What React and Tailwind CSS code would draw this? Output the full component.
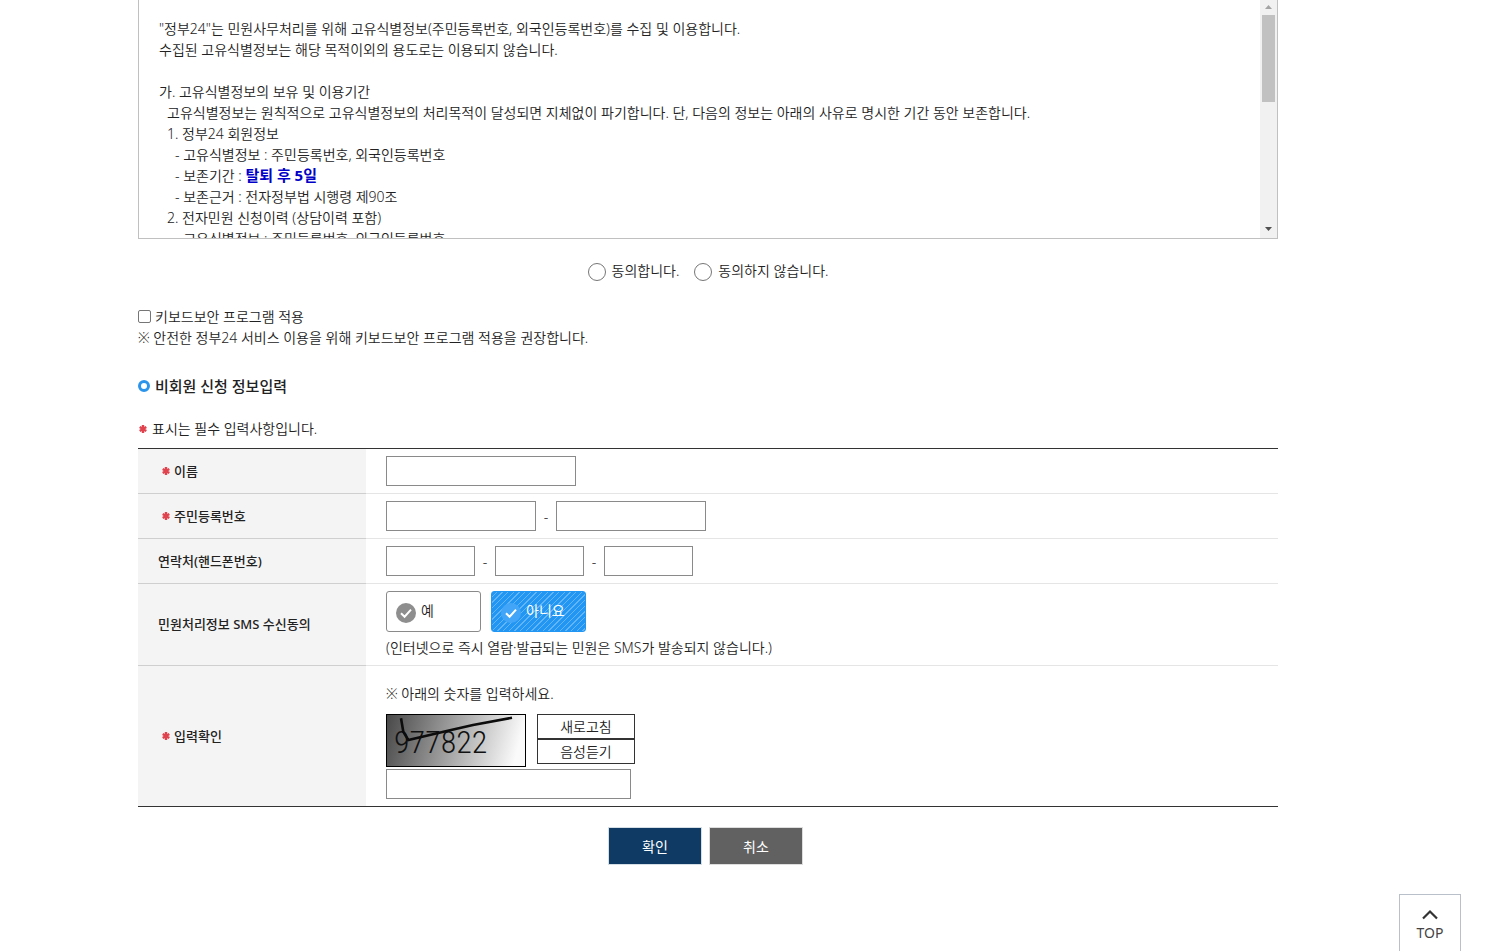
import React from "react";

function RequiredMark() {
  return (
    <svg className="h-2 w-2 shrink-0" viewBox="0 0 8 8" role="img" aria-label="필수">
      <path d="M4 0v8M0.7 2l6.6 4M7.3 2L0.7 6" stroke="#e0434e" strokeWidth="2.400" fill="none" />
    </svg>
  );
}

function CheckCircle({ circle, mark }) {
  return (
    <svg className="mt-[2px] h-5 w-5 shrink-0" viewBox="0 0 20 20" aria-hidden="true">
      <circle cx="10" cy="10" r="10" fill={circle} />
      <path d="M5 10.2l3.600 3.500 6.400-7" stroke={mark} strokeWidth="2" fill="none" />
    </svg>
  );
}

function Row({ label, htmlFor, required, children }) {
  const inner = (
    <>
      {required && <RequiredMark />}
      <span>{label}</span>
    </>
  );
  const inset = required ? "flex items-center gap-1 pl-6" : "flex items-center pl-5";
  return (
    <tr>
      <th
        scope="row"
        className="w-1/5 border-b border-[#cfcfcf] bg-[#f4f4f4] text-left align-middle text-[13px] leading-[21px] font-medium"
      >
        {htmlFor ? (
          <label htmlFor={htmlFor} className={inset}>{inner}</label>
        ) : (
          <span className={inset}>{inner}</span>
        )}
      </th>
      <td className="border-b border-[#e5e5e5] py-[7px] pl-5">{children}</td>
    </tr>
  );
}

const field = "block h-[30px] border border-[#8a8a8a] bg-white px-2 outline-none";

function Terms() {
  return (
    <div className="flex border border-t-0 border-[#c0c0c0]">
      <div
        tabIndex={0}
        role="region"
        aria-label="고유식별정보 수집 및 이용"
        className="h-[238px] flex-1 overflow-y-auto px-5 pt-[18px] [scrollbar-width:none]"
      >
        <p>"정부24"는 민원사무처리를 위해 고유식별정보(주민등록번호, 외국인등록번호)를 수집 및 이용합니다.</p>
        <p>수집된 고유식별정보는 해당 목적이외의 용도로는 이용되지 않습니다.</p>
        <p className="mt-[21px]">가. 고유식별정보의 보유 및 이용기간</p>
        <div className="pl-2">
          <p>고유식별정보는 원칙적으로 고유식별정보의 처리목적이 달성되면 지체없이 파기합니다. 단, 다음의 정보는 아래의 사유로 명시한 기간 동안 보존합니다.</p>
          <p>1. 정부24 회원정보</p>
          <div className="pl-2">
            <p>- 고유식별정보 : 주민등록번호, 외국인등록번호</p>
            <p>
              - 보존기간 : <strong className="text-[15px] leading-5 font-bold text-[#0000c8]">탈퇴 후 5일</strong>
            </p>
            <p>- 보존근거 : 전자정부법 시행령 제90조</p>
          </div>
          <p>2. 전자민원 신청이력 (상담이력 포함)</p>
          <div className="pl-2">
            <p>- 고유식별정보 : 주민등록번호, 외국인등록번호</p>
          </div>
        </div>
      </div>
      <div className="flex w-[17px] flex-col items-center bg-[#f1f1f1]" aria-hidden="true">
        <svg className="h-[15px] w-[17px]" viewBox="0 0 17 15">
          <path d="M5 9h7L8.500 5z" fill="#a3a3a3" />
        </svg>
        <div className="h-[87px] w-[13px] bg-[#c1c1c1]" />
        <svg className="mt-auto h-[17px] w-[17px]" viewBox="0 0 17 17">
          <path d="M5 6h7L8.500 10z" fill="#505050" />
        </svg>
      </div>
    </div>
  );
}

function AgreeRadio({ id, label }) {
  return (
    <label htmlFor={id} className="flex items-center gap-[6px]">
      <input
        id={id}
        type="radio"
        name="agree"
        className="mt-[3px] h-[18px] w-[18px] appearance-none rounded-full border border-[#767676] bg-white checked:border-[5px]"
      />
      {label}
    </label>
  );
}

function Captcha() {
  return (
    <svg className="h-[53px] w-[140px]" viewBox="0 0 140 53" role="img" aria-label="자동입력 방지 숫자">
      <defs>
        <linearGradient id="shade" x1="0" y1="0" x2="1" y2="0.1">
          <stop offset="0" stopColor="#484848" />
          <stop offset="1" stopColor="#fafafa" />
        </linearGradient>
      </defs>
      <rect x="0.5" y="0.5" width="139" height="52" fill="url(#shade)" stroke="#000" />
      <text x="8" y="39" fontSize="32" fill="#111" className="font-['Roboto_Condensed','Noto_Sans',sans-serif] font-light">977822</text>
      <path d="M15 4.300L17.300 17.700L22.300 26L60.700 17L87 11L126 3.700" stroke="#0c0c0c" strokeWidth="2.600" fill="none" />
    </svg>
  );
}

export default function App() {
  return (
    <div className="min-h-screen bg-white pr-[75px] pb-[86px] font-['Noto_Sans','Noto_Sans_CJK_KR',sans-serif] text-[14px] leading-[21px] font-[350] text-[#222]">
      <main className="mx-auto max-w-[1140px]">
        <Terms />

        <div className="mt-[21px] flex justify-center gap-[15px]">
          <AgreeRadio id="agree-yes" label="동의합니다." />
          <AgreeRadio id="agree-no" label="동의하지 않습니다." />
        </div>

        <div className="mt-[25px]">
          <label htmlFor="keyboard" className="flex items-center gap-1">
            <input
              id="keyboard"
              type="checkbox"
              className="h-[13px] w-[13px] appearance-none rounded-[2px] border border-[#767676] bg-white checked:bg-[#767676]"
            />
            키보드보안 프로그램 적용
          </label>
          <p>※ 안전한 정부24 서비스 이용을 위해 키보드보안 프로그램 적용을 권장합니다.</p>
        </div>

        <h2 className="mt-[26px] flex items-center gap-[5px] text-[15px] leading-6 font-medium">
          <span className="h-3 w-3 rounded-full border-[3px] border-[#2a93ea]" />
          비회원 신청 정보입력
        </h2>

        <p className="mt-5 flex items-center gap-[5px] pl-px">
          <RequiredMark />
          표시는 필수 입력사항입니다.
        </p>

        <form onSubmit={(e) => e.preventDefault()}>
          <table className="mt-[9px] w-full border-separate border-spacing-0 border-t border-[#333] [&_tr:last-child>*]:border-[#333]">
            <tbody>
              <Row label="이름" htmlFor="name" required>
                <input id="name" type="text" className={`${field} w-[190px]`} />
              </Row>
              <Row label="주민등록번호" htmlFor="rrn1" required>
                <div className="flex items-center">
                  <input id="rrn1" type="text" className={`${field} w-[150px]`} />
                  <span className="w-5 text-center">-</span>
                  <input type="password" aria-label="주민등록번호 뒷자리" className={`${field} w-[150px]`} />
                </div>
              </Row>
              <Row label="연락처(핸드폰번호)" htmlFor="tel1">
                <div className="flex items-center">
                  <input id="tel1" type="text" className={`${field} w-[89px]`} />
                  <span className="w-5 text-center">-</span>
                  <input type="text" aria-label="연락처 가운데자리" className={`${field} w-[89px]`} />
                  <span className="w-5 text-center">-</span>
                  <input type="text" aria-label="연락처 끝자리" className={`${field} w-[89px]`} />
                </div>
              </Row>
              <Row label="민원처리정보 SMS 수신동의">
                <div className="flex gap-[10px]">
                  <label className="relative flex h-[41px] w-[95px] items-center gap-[5px] rounded-[3px] border border-[#8a8a8a] pl-[9px]">
                    <input type="radio" name="sms" className="sr-only" />
                    <CheckCircle circle="#8e8e8e" mark="#ffffff" />
                    <span className="pb-[2px]">예</span>
                  </label>
                  <label className="relative flex h-[41px] w-[95px] items-center gap-[5px] rounded-[3px] border border-[#2196f3] bg-[repeating-linear-gradient(135deg,#2196f3_0px,#2196f3_3px,#63b5f7_3px,#63b5f7_4px)] pl-[9px] font-normal text-white">
                    <input type="radio" name="sms" defaultChecked className="sr-only" />
                    <CheckCircle circle="#42a5f8" mark="#ffffff" />
                    <span className="pb-[2px]">아니요</span>
                  </label>
                </div>
                <p className="mt-[5px]">(인터넷으로 즉시 열람·발급되는 민원은 SMS가 발송되지 않습니다.)</p>
              </Row>
              <Row label="입력확인" htmlFor="captcha" required>
                <p className="mt-[10px]">※ 아래의 숫자를 입력하세요.</p>
                <div className="mt-[10px] flex gap-[11px]">
                  <Captcha />
                  <div className="flex flex-col">
                    <button type="button" className="h-[25px] w-[98px] border border-[#333] leading-[21px]">새로고침</button>
                    <button type="button" className="h-[25px] w-[98px] border border-[#333] leading-[21px]">음성듣기</button>
                  </div>
                </div>
                <input id="captcha" type="text" className={`${field} mt-[2px] w-[245px]`} />
              </Row>
            </tbody>
          </table>

          <div className="mt-5 flex justify-center gap-[7px] pr-[5px] font-normal text-white">
            <button type="submit" className="h-[38px] w-[94px] border border-[#d5dde5] bg-[#0e3a63]">확인</button>
            <button type="button" className="h-[38px] w-[94px] border border-[#dddddd] bg-[#616161]">취소</button>
          </div>
        </form>
      </main>

      <a
        href="#top"
        className="fixed right-[30px] bottom-0 flex h-[57px] w-[62px] flex-col items-center border border-b-0 border-[#b9c0ca] bg-white pt-[14px] font-normal text-[#444]"
      >
        <svg className="h-[11px] w-4" viewBox="0 0 16 11" aria-hidden="true">
          <path d="M1 9.500L8 2.500l7 7" stroke="#333" strokeWidth="2.200" fill="none" />
        </svg>
        <span className="mt-[2px]">TOP</span>
      </a>
    </div>
  );
}
